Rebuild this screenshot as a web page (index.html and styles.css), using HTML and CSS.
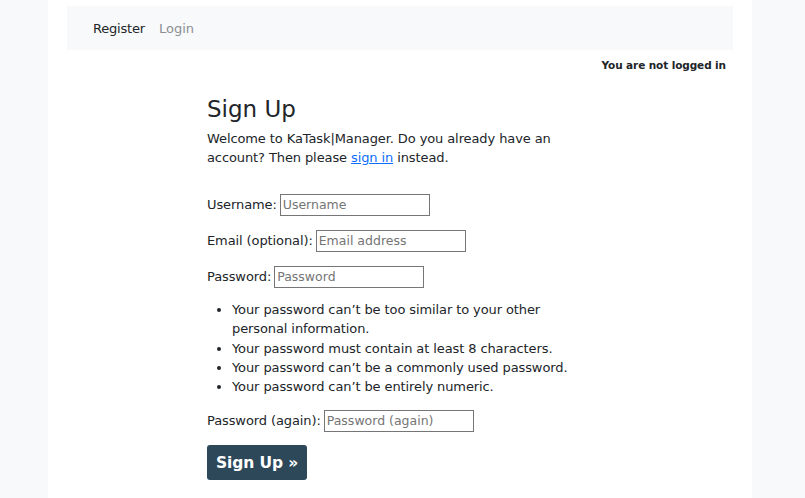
FILE: index.html
```html
<!DOCTYPE html>
<html>
<head>
<meta charset="utf-8">
<link rel="stylesheet" href="styles.css">
</head>
<body>
<div class="page">
  <nav class="navbar">
    <a class="nav-link active" href="#">Register</a>
    <a class="nav-link" href="#">Login</a>
  </nav>
  <div class="status">You are not logged in</div>
  <main class="content">
    <h1 class="title">Sign Up</h1>
    <p class="intro">Welcome to KaTask|Manager. Do you already have an account? Then please <a href="#" class="link">sign in</a> instead.</p>
    <form class="form">
      <p class="row"><label>Username:</label> <input type="text" placeholder="Username"></p>
      <p class="row"><label>Email (optional):</label> <input type="text" placeholder="Email address"></p>
      <p class="row"><label>Password:</label> <input type="password" placeholder="Password"></p>
      <ul class="help">
        <li>Your password can’t be too similar to your other personal information.</li>
        <li>Your password must contain at least 8 characters.</li>
        <li>Your password can’t be a commonly used password.</li>
        <li>Your password can’t be entirely numeric.</li>
      </ul>
      <p class="row"><label>Password (again):</label> <input type="password" placeholder="Password (again)"></p>
      <button type="button" class="btn">Sign Up »</button>
    </form>
  </main>
</div>
</body>
</html>
```
FILE: styles.css
```css
html, body {
  margin: 0;
  padding: 0;
  background: #f8f9fa;
  font-family: "DejaVu Sans", "Noto Sans", sans-serif;
  color: #212529;
}
.page {
  width: 704px;
  margin-left: 48px;
  min-height: 498px;
  box-sizing: border-box;
  background: #fff;
  padding: 6px 19px 0;
}
.navbar {
  height: 44px;
  background: #f8f9fa;
  display: flex;
  align-items: center;
  padding-left: 26px;
  gap: 14px;
  font-size: 13px;
}
.nav-link {
  text-decoration: none;
  color: #8a8f94;
}
.nav-link.active {
  color: #212529;
  letter-spacing: -0.2px;
}
.status {
  text-align: right;
  padding-right: 7px;
  font-size: 10.5px;
  font-weight: bold;
  margin-top: 8px;
  line-height: 14px;
  letter-spacing: -0.1px;
}
.content {
  padding-left: 140px;
  width: 372px;
  font-size: 13px;
  letter-spacing: -0.1px;
}
.title {
  font-size: 23px;
  font-weight: normal;
  margin: 22px 0 0;
  line-height: 30px;
  letter-spacing: 0;
}
.intro {
  margin: 5px 0 0;
  line-height: 19px;
}
.link {
  color: #0d6efd;
}
.form {
  margin-top: 27px;
}
.row {
  margin: 0 0 14px;
  line-height: 22px;
  display: flex;
  align-items: center;
  gap: 3px;
}
.row.tight {
  margin-bottom: 13px;
}
.row input {
  width: 150px;
  height: 22px;
  box-sizing: border-box;
  border: 1px solid #767676;
  padding: 1px 2px;
  font: inherit;
  font-size: 12.5px;
  margin: 0;
  border-radius: 0;
}
.row input::placeholder {
  color: #757575;
}
.help {
  margin: -2px 0 14px;
  padding-left: 25px;
  line-height: 19.25px;
}
.btn {
  background: #2c4859;
  color: #fff;
  border: none;
  border-radius: 3px;
  font: inherit;
  font-weight: bold;
  font-size: 15.5px;
  padding: 0 9px;
  height: 35px;
  letter-spacing: -0.1px;
  margin-top: -1px;
}
```
